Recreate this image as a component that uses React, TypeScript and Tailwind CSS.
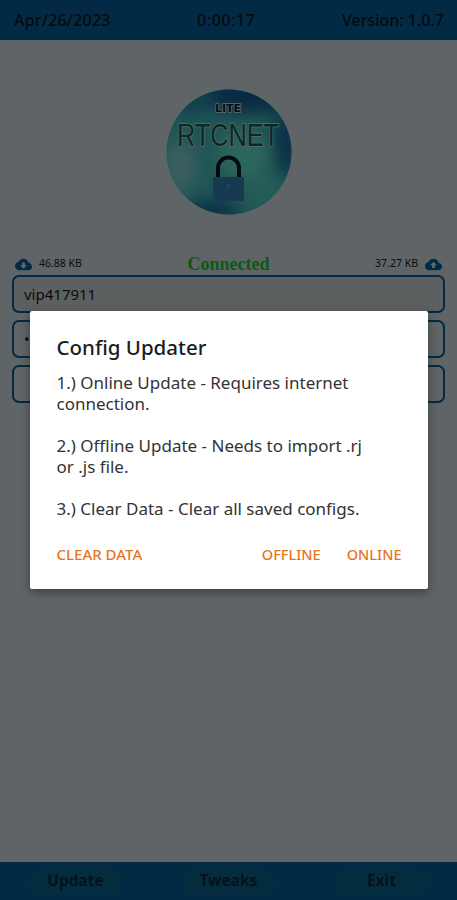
const CLOUD = "M19.35 10.04C18.67 6.59 15.64 4 12 4 9.11 4 6.6 5.64 5.35 8.04 2.34 8.36 0 10.91 0 14c0 3.31 2.69 6 6 6h13c2.76 0 5-2.24 5-5 0-2.64-2.05-4.78-4.65-4.96z";

function CloudIcon({ up }: { up?: boolean }) {
  return (
    <svg width="17" height="17" viewBox="0 0 24 24" className="shrink-0">
      <path
        fillRule="evenodd"
        fill="#0869aa"
        d={CLOUD + (up ? "M14 13v4h-4v-4H7l5-5 5 5h-3z" : "M17 13l-5 5-5-5h3V9h4v4h3z")}
      />
    </svg>
  );
}

function Logo() {
  return (
    <svg width="126" height="126" viewBox="0 0 126 126" className="block">
      <defs>
        <clipPath id="c"><circle cx="63" cy="63" r="62.5" /></clipPath>
        <filter id="b"><feGaussianBlur stdDeviation="8" /></filter>
      </defs>
      <g clipPath="url(#c)">
        <rect width="126" height="126" fill="#50d4d6" />
        <g filter="url(#b)">
          <ellipse cx="85" cy="6" rx="52" ry="18" fill="#1268a8" />
          <ellipse cx="22" cy="12" rx="28" ry="12" fill="#2a9cc0" />
          <ellipse cx="120" cy="55" rx="14" ry="32" fill="#1a78b0" />
          <ellipse cx="78" cy="66" rx="26" ry="24" fill="#70ffe0" />
          <ellipse cx="14" cy="78" rx="16" ry="25" fill="#98eef0" />
          <ellipse cx="45" cy="122" rx="30" ry="10" fill="#1a72a8" />
          <ellipse cx="98" cy="102" rx="20" ry="16" fill="#5ce8d8" />
        </g>
        <text x="62" y="23" textAnchor="middle" fontFamily="'DejaVu Sans', sans-serif" fontWeight="700" fontSize="10" textLength="26" lengthAdjust="spacingAndGlyphs" fill="#06263a" stroke="#f4ffff" strokeWidth="1.400" paintOrder="stroke">LITE</text>
        <text x="62" y="57" textAnchor="middle" fontFamily="'Liberation Sans', sans-serif" fontSize="32" textLength="102" lengthAdjust="spacingAndGlyphs" fill="#0a6a68" stroke="#e8ffff" strokeWidth="1.6" paintOrder="stroke">RTCNET</text>
        <path d="M52 90V79a10.500 10.500 0 0 1 21 0v11" fill="none" stroke="#06202f" strokeWidth="4" />
        <rect x="47" y="88" width="31" height="24" fill="#3a92cc" />
        <path d="M58 94l4.500 11 4.500-11z" fill="#4aa0d8" stroke="#2a78b0" strokeWidth="1" />
      </g>
    </svg>
  );
}

function Field({ children, dim }: { children?: React.ReactNode; dim?: boolean }) {
  return (
    <div className={`h-[38px] rounded-[7px] border-2 border-[#0869aa] px-[10px] flex items-center text-[15px] text-[#222] ${dim ? "bg-[#e8f0f2]" : ""}`}>
      {children}
    </div>
  );
}

function FootButton({ label }: { label: string }) {
  return (
    <div className="w-[97px] h-[26px] rounded-full bg-[#0a6f9f] flex items-center justify-center text-[15.500px] font-bold text-[#0a2f45]">
      {label}
    </div>
  );
}

export default function App() {
  return (
    <div className="relative w-[457px] h-[900px] overflow-hidden flex flex-col bg-[#edfcff] font-['Noto_Sans',sans-serif]">
      <header className="h-[40px] shrink-0 bg-[#0869aa] flex items-center justify-between pl-[14px] pr-[13px] text-[16px] font-medium text-[#0a1a26]">
        <span className="tracking-[0.2px]">Apr/26/2023</span>
        <span className="tracking-[0.6px]">0:00:17</span>
        <span>Version: 1.0.7</span>
      </header>

      <main className="flex-1 flex flex-col px-[12px]">
        <div className="flex justify-center pt-[49px]">
          <Logo />
        </div>
        <div className="mt-[38px] h-[22px] flex items-center justify-between px-[3px]">
          <div className="w-[100px] flex items-center gap-[7px] text-[10.500px] text-[#222]">
            <CloudIcon />
            <span>46.88 KB</span>
          </div>
          <span className="font-['Liberation_Serif',serif] font-bold text-[18px] text-[#1ae030]">Connected</span>
          <div className="w-[100px] flex items-center justify-end gap-[7px] text-[10.500px] text-[#222]">
            <span>37.27 KB</span>
            <CloudIcon up />
          </div>
        </div>
        <div className="flex flex-col gap-[7px]">
          <Field dim>vip417911</Field>
          <Field>••••••••</Field>
          <Field />
        </div>
      </main>

      <footer className="h-[38px] shrink-0 bg-[#0869aa] flex items-center justify-between px-[27px]">
        <FootButton label="Update" />
        <FootButton label="Tweaks" />
        <FootButton label="Exit" />
      </footer>

      <div className="absolute inset-0 bg-black/60 flex items-center justify-center">
        <div className="w-[398px] h-[278px] bg-white rounded-[2px] shadow-[0_3px_10px_rgba(0,0,0,0.4)] pl-[27px] pr-[26px] pt-[21px] flex flex-col">
          <h2 className="text-[20.500px] leading-[30px] font-medium text-[#1c1c1c]">Config Updater</h2>
          <div className="mt-[10px] text-[17px] leading-[21px] text-[#333]">
            <p>1.) Online Update - Requires internet<br />connection.</p>
            <p className="mt-[21px]">2.) Offline Update - Needs to import .rj<br />or .js file.</p>
            <p className="mt-[21px]">3.) Clear Data - Clear all saved configs.</p>
          </div>
          <div className="mt-[24px] flex items-baseline text-[14.500px] font-medium text-[#e8741e]">
            <span className="text-[15px]">CLEAR DATA</span>
            <span className="ml-auto">OFFLINE</span>
            <span className="ml-[26px]">ONLINE</span>
          </div>
        </div>
      </div>
    </div>
  );
}
